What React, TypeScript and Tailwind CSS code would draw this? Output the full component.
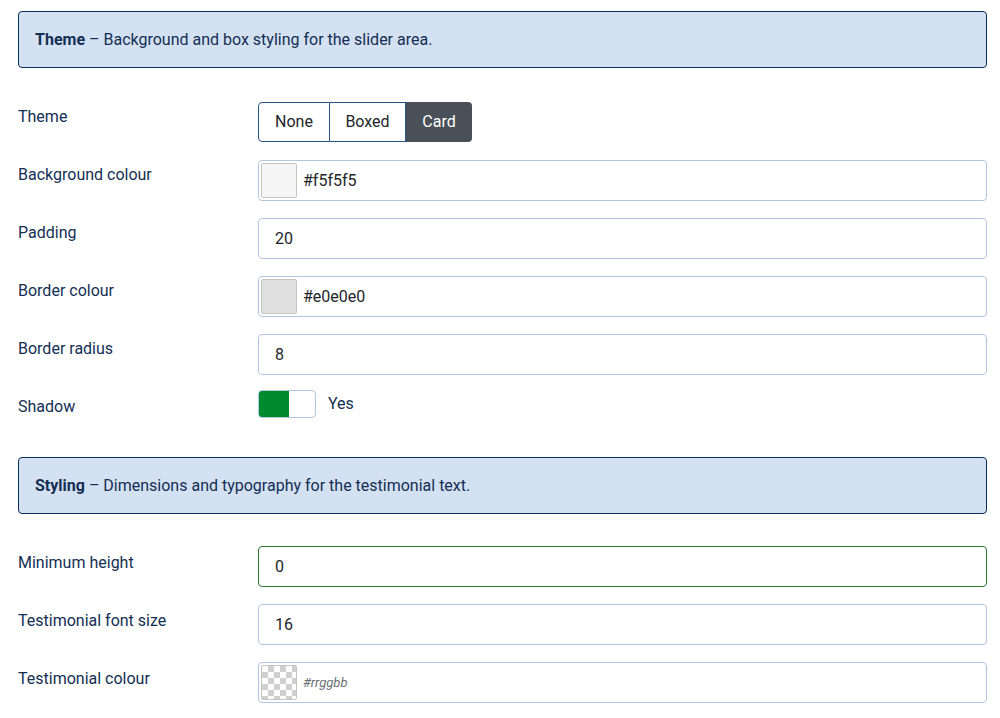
import React from "react";

const font = { fontFamily: "Roboto, 'Noto Sans', sans-serif" };

function Alert({ title, text }: { title: string; text: string }) {
  return (
    <div className="h-[57px] flex items-center rounded-[4px] border border-[#0c2e5b] bg-[#d3e1f3] px-4 text-[16px] text-[#132f53]">
      <span>
        <strong className="font-bold">{title}</strong> – {text}
      </span>
    </div>
  );
}

function Row({
  label,
  children,
  mb = "mb-[17px]",
  pt = "pt-[3px]",
}: {
  label: string;
  children: React.ReactNode;
  mb?: string;
  pt?: string;
}) {
  return (
    <div className={`flex ${mb}`}>
      <div className={`w-[240px] shrink-0 ${pt} text-[16px] leading-[24px] text-[#132f53]`}>{label}</div>
      <div className="flex-1">{children}</div>
    </div>
  );
}

function TextInput({ value, green }: { value: string; green?: boolean }) {
  return (
    <div
      className={`h-[41px] flex items-center rounded-[4px] border ${
        green ? "border-[#2f7d32]" : "border-[#b2c5e1]"
      } bg-white pl-4 text-[16px] text-[#22262a]`}
    >
      {value}
    </div>
  );
}

function ColorInput({ value, swatch, placeholder }: { value: string; swatch?: string; placeholder?: boolean }) {
  return (
    <div className="h-[41px] flex items-center rounded-[4px] border border-[#b2c5e1] bg-white pl-[2px] text-[16px] text-[#22262a]">
      {swatch ? (
        <div className="w-[36px] h-[35px] rounded-[2px] border border-[#c4c4c4]" style={{ background: swatch }} />
      ) : (
        <div
          className="w-[36px] h-[35px] rounded-[2px] border border-[#c4c4c4]"
          style={{
            backgroundColor: "#fff",
            backgroundImage:
              "linear-gradient(45deg,#d0d0d0 25%,transparent 25%,transparent 75%,#d0d0d0 75%),linear-gradient(45deg,#d0d0d0 25%,transparent 25%,transparent 75%,#d0d0d0 75%)",
            backgroundSize: "12px 12px",
            backgroundPosition: "0 0,6px 6px",
          }}
        />
      )}
      <span className={`ml-[6px] ${placeholder ? "italic text-[13px] text-[#6b6f73]" : ""}`}>{value}</span>
    </div>
  );
}

export default function App() {
  return (
    <div className="bg-white min-h-[718px] pl-[18px] pr-[13px] pt-[11px]" style={font}>
      <Alert title="Theme" text="Background and box styling for the slider area." />
      <div className="h-[34px]" />
      <Row label="Theme" mb="mb-[18px]">
        <div className="flex h-[40px] text-[16px]">
          <div className="flex items-center px-4 w-[72px] justify-center border border-[#2a5285] rounded-l-[4px] text-[#22262a] bg-white">None</div>
          <div className="flex items-center w-[76px] justify-center border-y border-r border-[#2a5285] text-[#22262a] bg-white">Boxed</div>
          <div className="flex items-center w-[66px] justify-center bg-[#495057] rounded-r-[4px] text-white">Card</div>
        </div>
      </Row>
      <Row label="Background colour">
        <ColorInput value="#f5f5f5" swatch="#f5f5f5" />
      </Row>
      <Row label="Padding">
        <TextInput value="20" />
      </Row>
      <Row label="Border colour">
        <ColorInput value="#e0e0e0" swatch="#e0e0e0" />
      </Row>
      <Row label="Border radius" mb="mb-[15px]">
        <TextInput value="8" />
      </Row>
      <div className="flex">
        <div className="w-[240px] shrink-0 pt-[5px] text-[16px] leading-[24px] text-[#132f53]">Shadow</div>
        <div className="flex items-center h-[28px]">
          <div className="w-[58px] h-[28px] rounded-[4px] border border-[#b2c5e1] bg-white overflow-hidden flex">
            <div className="w-[30px] h-full bg-[#008a2e]" />
          </div>
          <span className="ml-[12px] text-[16px] text-[#132f53]">Yes</span>
        </div>
      </div>
      <div className="h-[38px]" />
      <Alert title="Styling" text="Dimensions and typography for the testimonial text." />
      <div className="h-[32px]" />
      <Row label="Minimum height" pt="pt-[5px]">
        <TextInput value="0" green />
      </Row>
      <Row label="Testimonial font size" pt="pt-[5px]">
        <TextInput value="16" />
      </Row>
      <Row label="Testimonial colour" pt="pt-[5px]">
        <ColorInput value="#rrggbb" placeholder />
      </Row>
    </div>
  );
}
